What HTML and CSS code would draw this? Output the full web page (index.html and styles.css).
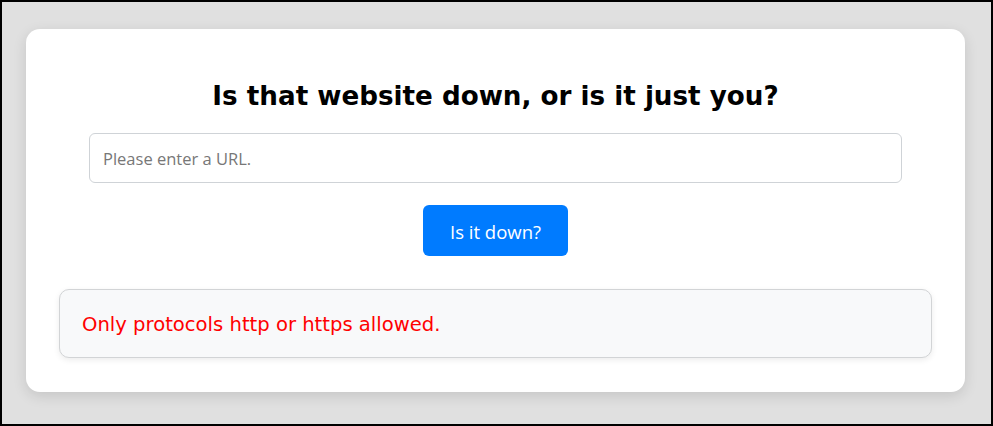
FILE: index.html
```html
<!DOCTYPE html>
<html lang="en">
<head>
<meta charset="utf-8">
<title>Is it down?</title>
<link rel="stylesheet" href="styles.css">
</head>
<body>
<div class="page">
  <main class="card">
    <h1 class="title">Is that website down, or is it just you?</h1>
    <form class="check-form" onsubmit="return false;">
      <input class="url-input" type="text" placeholder="Please enter a URL.">
      <button class="check-btn" type="submit">Is it down?</button>
    </form>
    <div class="result">Only protocols http or https allowed.</div>
  </main>
</div>
</body>
</html>
```

FILE: styles.css
```css
* { box-sizing: border-box; }
html, body { margin: 0; padding: 0; }
body {
  width: 993px;
  height: 426px;
  border: 2px solid #000;
  background: #e0e0e0;
  font-family: "DejaVu Sans", sans-serif;
  overflow: hidden;
}
.page {
  padding: 27px 26px 0 24px;
}
.card {
  background: #fff;
  border-radius: 14px;
  box-shadow: 0 4px 14px rgba(0, 0, 0, 0.12);
  height: 363px;
  padding: 52px 33px 33px;
}
.title {
  margin: 0;
  font-family: "DejaVu Sans", sans-serif;
  font-weight: bold;
  font-size: 26.2px;
  line-height: 30px;
  text-align: center;
  color: #000;
}
.check-form {
  display: flex;
  flex-direction: column;
  align-items: center;
  margin-top: 22px;
}
.url-input {
  align-self: stretch;
  margin: 0 30px;
  height: 50px;
  border: 1px solid #cfd3d7;
  border-radius: 6px;
  padding: 0 13px;
  font-family: "Open Sans", sans-serif;
  font-size: 16.5px;
  color: #333;
  background: #fff;
  outline: none;
}
.url-input::placeholder { color: #777; }
.check-btn {
  margin-top: 22px;
  width: 145px;
  height: 51px;
  border: none;
  border-radius: 6px;
  background: #007bff;
  color: #fff;
  font-family: "Open Sans", sans-serif;
  font-size: 18.5px;
  padding-top: 2px;
  cursor: pointer;
}
.result {
  margin-top: 33px;
  height: 69px;
  display: flex;
  align-items: center;
  padding: 1px 22px 0;
  background: #f8f9fa;
  border: 1px solid #d2d4d6;
  border-radius: 10px;
  box-shadow: 0 2px 6px rgba(0, 0, 0, 0.08);
  color: #ff0000;
  font-size: 19.6px;
}
```
